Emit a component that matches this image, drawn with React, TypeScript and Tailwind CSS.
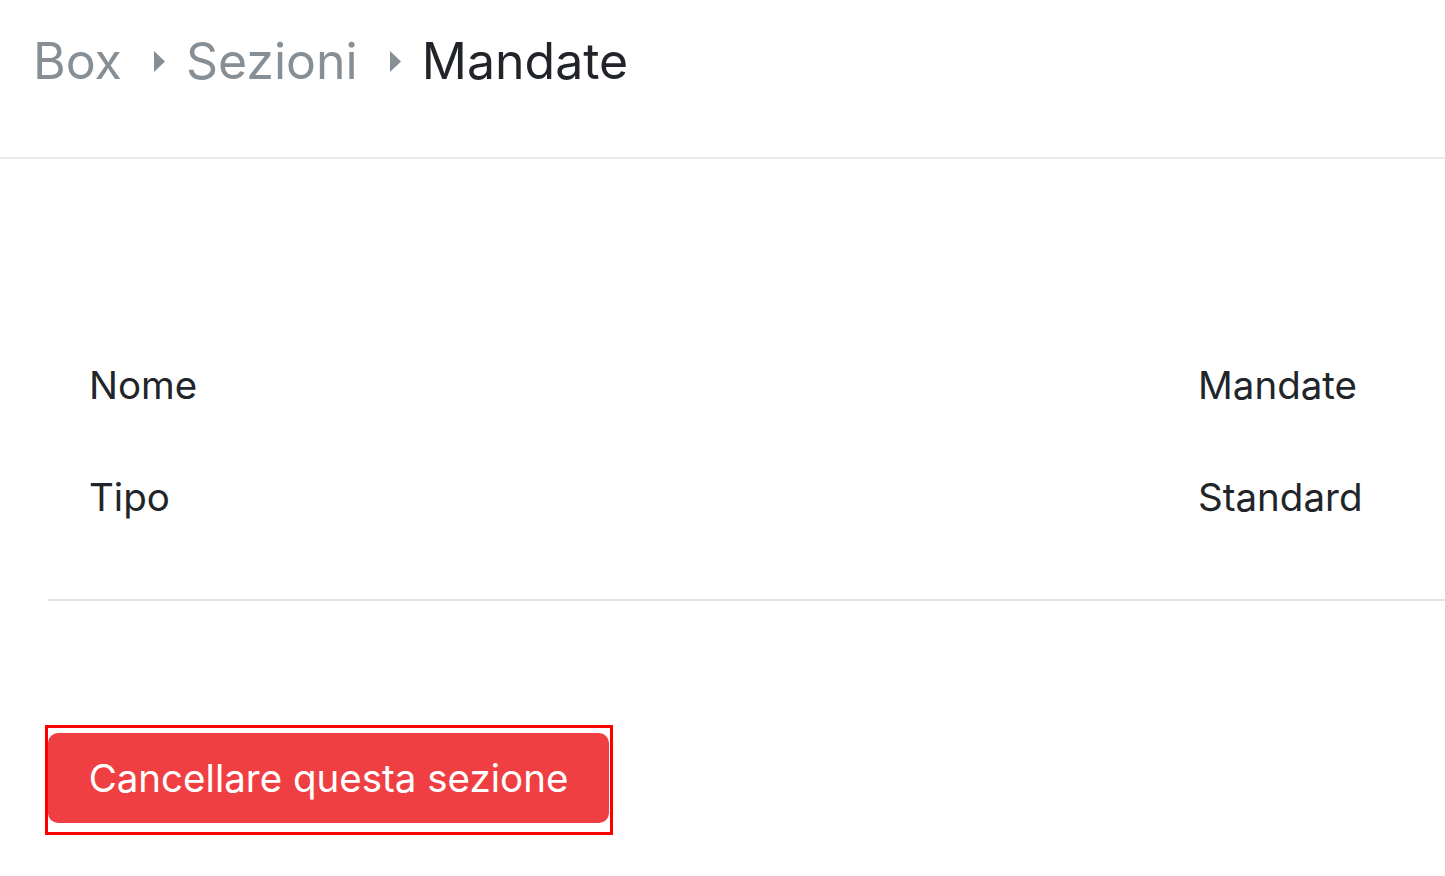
const rows = [
  { label: "Nome", value: "Mandate" },
  { label: "Tipo", value: "Standard" },
];

function Caret() {
  return (
    <svg width="11" height="21" viewBox="0 0 11 21" className="shrink-0 ml-[32px] mr-[21px]">
      <path d="M0 0 L11 10.5 L0 21 Z" fill="#868e96" />
    </svg>
  );
}

export default function App() {
  return (
    <div className="min-h-screen w-full bg-white text-[#212529] font-['Inter',sans-serif] overflow-hidden">
      {/* Breadcrumb header */}
      <div className="h-[159px] border-b-2 border-[#e9ecef] pt-[36px] pl-[33px]">
        <nav className="flex items-center text-[50px] leading-[50px]">
          <span className="text-[#868e96]">Box</span>
          <Caret />
          <span className="text-[#868e96]">Sezioni</span>
          <Caret />
          <span className="text-[#212529]">Mandate</span>
        </nav>
      </div>

      {/* Details */}
      <div className="ml-[48px] mt-[170px]">
        <div className="border-b-2 border-[#e2e3e5] pb-[46px]">
          {rows.map((r) => (
            <div key={r.label} className="flex items-center h-[112px] pl-[41px] text-[38.5px] leading-[60px]">
              <div className="w-[1109px] shrink-0">{r.label}</div>
              <div className="whitespace-nowrap">{r.value}</div>
            </div>
          ))}
        </div>
      </div>

      {/* Action */}
      <div className="ml-[45px] mt-[124px] inline-block border-[3px] border-[#ff0000] pt-[5px] pb-[9px] pr-[1px]">
        <button className="block w-[561px] h-[90px] rounded-[10px] bg-[#ef3f42] text-white text-[38.5px] leading-[60px] text-center">
          Cancellare questa sezione
        </button>
      </div>
    </div>
  );
}
